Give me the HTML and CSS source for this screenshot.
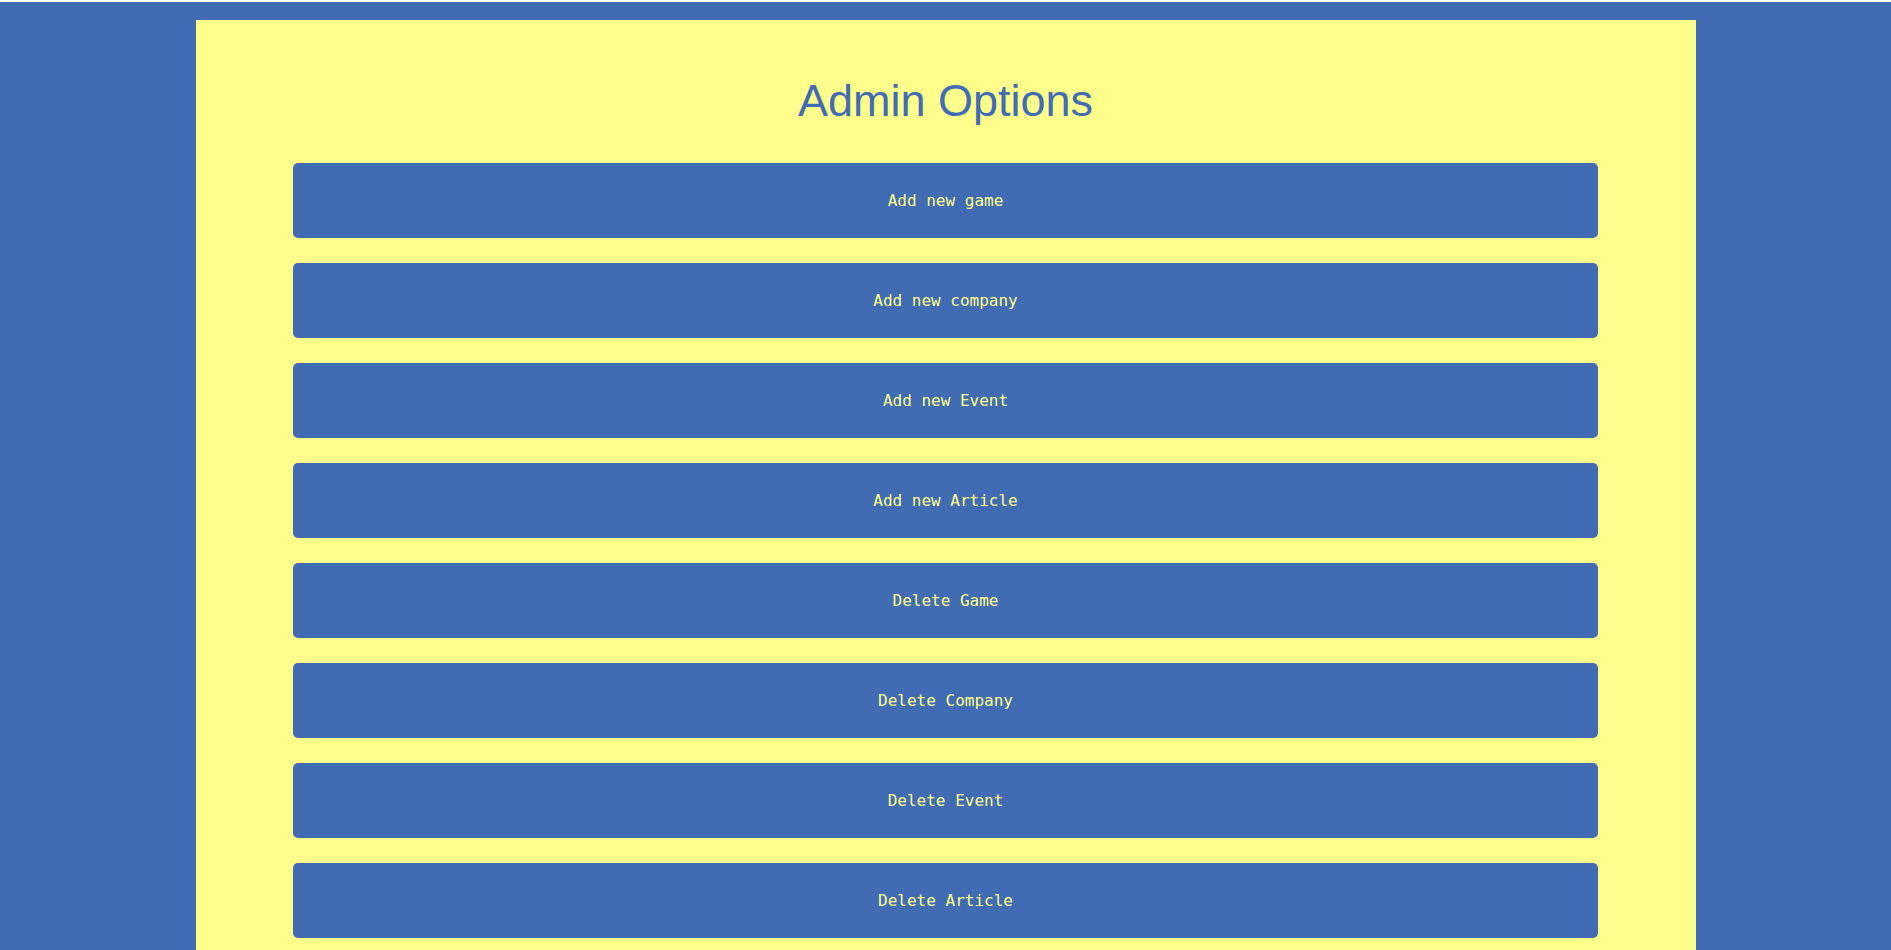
FILE: index.html
```html
<!DOCTYPE html>
<html lang="en">
<head>
<meta charset="utf-8">
<title>Admin Options</title>
<link rel="stylesheet" href="styles.css">
</head>
<body>
<main class="panel">
  <h1 class="title">Admin Options</h1>
  <nav class="options">
    <a class="option" href="#">Add new game</a>
    <a class="option" href="#">Add new company</a>
    <a class="option" href="#">Add new Event</a>
    <a class="option" href="#">Add new Article</a>
    <a class="option" href="#">Delete Game</a>
    <a class="option" href="#">Delete Company</a>
    <a class="option" href="#">Delete Event</a>
    <a class="option" href="#">Delete Article</a>
  </nav>
</main>
</body>
</html>
```
FILE: styles.css
```css
html {
  background: #416cb4;
}
body {
  margin: 0;
  border-top: 2px solid #ffffff;
  padding-top: 18px;
  font-family: "Liberation Sans", Arial, sans-serif;
}
.panel {
  width: 1500px;
  margin: 0 auto;
  background: #fcfd8a;
  padding: 55px 0 40px;
  box-sizing: border-box;
}
.title {
  margin: 0 0 36px;
  text-align: center;
  font-weight: normal;
  font-size: 45px;
  line-height: 52px;
  color: #416cb4;
}
.options {
  display: flex;
  flex-direction: column;
  align-items: center;
  gap: 25px;
}
.option {
  width: 87%;
  height: 75px;
  display: flex;
  align-items: center;
  justify-content: center;
  background: #416cb4;
  border-radius: 5px;
  color: #fcfd8a;
  text-decoration: none;
  font-family: "DejaVu Sans Mono", "Liberation Mono", monospace;
  font-size: 16px;
}
```
